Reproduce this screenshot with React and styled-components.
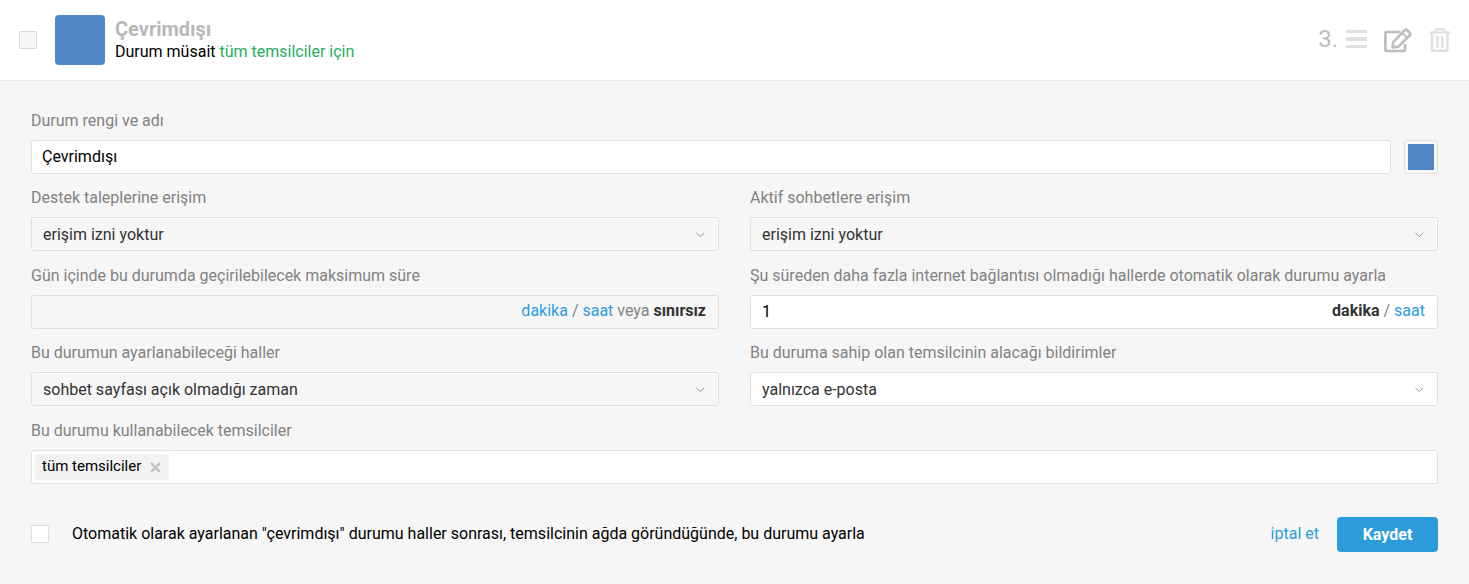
import React from "react";
import styled, { createGlobalStyle } from "styled-components";

const color = {
  page: "#f6f6f6",
  white: "#ffffff",
  border: "#dfdfdf",
  label: "#828282",
  muted: "#bdbdbd",
  faint: "#e0e0e0",
  text: "#333333",
  link: "#2d9cdb",
  green: "#27ae60",
  status: "#4f86c6",
};

const GlobalStyle = createGlobalStyle`
  *, *::before, *::after { box-sizing: border-box; }
  body { margin: 0; background: ${color.page}; }
  body, input, select, button {
    font-family: Roboto, "Liberation Sans", sans-serif;
    font-size: 16px;
    line-height: 20px;
  }
`;

const Header = styled.header`
  display: flex;
  align-items: center;
  gap: 18px;
  padding: 15px 18px 15px 19px;
  background: ${color.white};
  border-bottom: 1px solid #e8e8e8;
`;

const Checkbox = styled.input.attrs({ type: "checkbox" })`
  appearance: none;
  flex: none;
  width: 18px;
  height: 18px;
  margin: 0;
  border: 1px solid ${(p) => (p.$muted ? "#d8d8d8" : color.border)};
  border-radius: 2px;
  background: ${(p) => (p.$muted ? color.page : color.white)};
  &:checked { background: ${color.link}; }
`;

const Status = styled.div`
  display: flex;
  flex: 1;
  align-items: center;
  gap: 10px;
`;

const StatusColor = styled.span`
  width: 50px;
  height: 50px;
  border-radius: 4px;
  background: ${color.status};
`;

const StatusName = styled.h1`
  margin: 0;
  color: #b8b8b8;
  font-size: 20px;
  font-weight: 700;
  line-height: 24px;
`;

const StatusInfo = styled.p`
  margin: 0;
  color: #000;
  line-height: 22px;
`;

const Audience = styled.span`
  color: ${color.green};
`;

const Tools = styled.div`
  display: flex;
  align-items: center;
`;

const Order = styled.span`
  margin-right: 8px;
  color: ${color.muted};
  font-size: 24px;
  line-height: 28px;
  padding-bottom: 2px;
`;

const IconButton = styled.button`
  display: flex;
  padding: 0;
  margin-right: ${(p) => p.$gap || 0}px;
  border: 0;
  background: none;
  color: ${(p) => (p.$faint ? color.faint : color.muted)};
  cursor: pointer;
`;

const Form = styled.form`
  padding: 30px 31px 32px;
`;

const Fields = styled.div`
  display: grid;
  grid-template-columns: 1fr 1fr;
  gap: 14px 31px;
`;

const Field = styled.div`
  grid-column: ${(p) => (p.$wide ? "1 / -1" : "auto")};
  min-width: 0;
`;

const Label = styled.label`
  display: block;
  margin-bottom: 9px;
  color: ${color.label};
`;

const NameRow = styled.div`
  display: flex;
  gap: 13px;
`;

const TextInput = styled.input`
  flex: 1;
  min-width: 0;
  height: 34px;
  padding: 0 10px 1px;
  border: 1px solid ${color.border};
  border-radius: 3px;
  background: ${color.white};
  color: #000;
`;

const ColorInput = styled.input.attrs({ type: "color" })`
  appearance: none;
  flex: none;
  width: 34px;
  height: 34px;
  padding: 3px;
  border: 1px solid ${color.border};
  border-radius: 3px;
  background: #f8f8f8;
  &::-webkit-color-swatch-wrapper { padding: 0; }
  &::-webkit-color-swatch { border: 0; }
`;

const SelectBox = styled.div`
  position: relative;
  padding-bottom: 1px;
`;

const SelectInput = styled.select`
  appearance: none;
  display: block;
  width: 100%;
  height: 34px;
  padding: 2px 36px 0 11px;
  border: 1px solid ${color.border};
  border-radius: 3px;
  background: ${(p) => (p.$muted ? color.page : color.white)};
  box-shadow: inset -1px 1px 0 ${color.white};
  color: ${color.text};
`;

const Chevron = styled.svg`
  position: absolute;
  top: 15px;
  right: 14px;
  pointer-events: none;
`;

const DurationBox = styled.div`
  display: flex;
  height: 34px;
  padding: 0 12px 0 11px;
  border: 1px solid ${color.border};
  border-radius: 3px;
  background: ${(p) => (p.$muted ? color.page : color.white)};
`;

const DurationInput = styled.input`
  flex: 1;
  min-width: 0;
  padding: 0;
  border: 0;
  background: none;
  color: #000;
`;

const Units = styled.span`
  color: ${color.label};
  line-height: 30px;
`;

const Link = styled.a`
  color: ${color.link};
  text-decoration: none;
`;

const ActiveUnit = styled.b`
  color: ${color.text};
`;

const Tags = styled.div`
  display: flex;
  height: 34px;
  padding: 3px;
  border: 1px solid ${color.border};
  border-radius: 3px;
  background: ${color.white};
`;

const Tag = styled.span`
  display: flex;
  align-items: center;
  gap: 9px;
  padding: 0 8px 0 7px;
  border-radius: 3px;
  background: #f2f2f2;
  color: #000;
  font-size: 15px;
`;

const TagText = styled.span`
  padding-bottom: 2px;
`;

const TagInput = styled.input`
  flex: 1;
  min-width: 0;
  border: 0;
  background: none;
  outline: none;
`;

const Footer = styled.div`
  display: flex;
  align-items: center;
  gap: 18px;
  margin-top: 33px;
`;

const Option = styled.label`
  display: flex;
  flex: 1;
  align-items: center;
  gap: 23px;
  padding-bottom: 2px;
  color: #000;
`;

const CancelLink = styled(Link)`
  padding-bottom: 2px;
`;

const SaveButton = styled.button`
  min-width: 101px;
  height: 35px;
  padding: 0 20px;
  border: 0;
  border-radius: 4px;
  background: ${color.link};
  color: ${color.white};
  font-weight: 700;
  cursor: pointer;
`;

function Select({ id, label, value, muted }) {
  return (
    <Field>
      <Label htmlFor={id}>{label}</Label>
      <SelectBox>
        <SelectInput id={id} $muted={muted} defaultValue={value}>
          <option>{value}</option>
        </SelectInput>
        <Chevron width="9" height="6" viewBox="0 0 9 6" fill="none" stroke="#999999">
          <path d="M0.5 1L4.3 4.6L8.1 1" />
        </Chevron>
      </SelectBox>
    </Field>
  );
}

const DragIcon = () => (
  <svg width="21" height="20" viewBox="0 0 21 20" fill="currentColor">
    <path d="M0 0h21v3H0zM0 7h21v4H0zM0 15h21v3H0z" />
  </svg>
);

const EditIcon = () => (
  <svg width="28" height="25" viewBox="0 0 28 25" fill="none" stroke="currentColor" strokeWidth="2.6" strokeLinejoin="round">
    <path d="M16.5 4H2.4Q1.4 4 1.4 5V22Q1.4 23 2.4 23H20Q21 23 21 22V16" />
    <path d="M8.6 19.4L9.2 14.2L20.4 2.4Q21.8 1 23.3 2.3L25.6 4.5Q27 6 25.6 7.5L14.4 18.6Z" />
    <path d="M18.3 5L23 9.6" strokeWidth="1.8" />
  </svg>
);

const TrashIcon = () => (
  <svg width="22" height="25" viewBox="0 0 22 25" fill="none" stroke="currentColor">
    <path d="M0.5 4.5H21.5M6 4L7.4 1.2H14.6L16 4" strokeWidth="2.2" />
    <path d="M3 5V21.5Q3 22.8 4.3 22.8H17.1Q18.4 22.8 18.4 21.5V5" strokeWidth="2.6" />
    <path d="M8.4 8V20M13.4 8V20" strokeWidth="2.4" />
  </svg>
);

const stop = (event) => event.preventDefault();

export default function App() {
  return (
    <>
      <GlobalStyle />
      <Header>
        <Checkbox $muted aria-label="Çevrimdışı" />
        <Status>
          <StatusColor />
          <div>
            <StatusName>Çevrimdışı</StatusName>
            <StatusInfo>
              Durum müsait <Audience>tüm temsilciler için</Audience>
            </StatusInfo>
          </div>
        </Status>
        <Tools>
          <Order>3.</Order>
          <IconButton $faint $gap={17} aria-label="Sırala"><DragIcon /></IconButton>
          <IconButton $gap={17} aria-label="Düzenle"><EditIcon /></IconButton>
          <IconButton $faint aria-label="Sil"><TrashIcon /></IconButton>
        </Tools>
      </Header>

      <Form onSubmit={stop}>
        <Fields>
          <Field $wide>
            <Label htmlFor="name">Durum rengi ve adı</Label>
            <NameRow>
              <TextInput id="name" defaultValue="Çevrimdışı" />
              <ColorInput aria-label="Durum rengi" defaultValue={color.status} />
            </NameRow>
          </Field>

          <Select id="tickets" label="Destek taleplerine erişim" value="erişim izni yoktur" muted />
          <Select id="chats" label="Aktif sohbetlere erişim" value="erişim izni yoktur" muted />

          <Field>
            <Label htmlFor="limit">Gün içinde bu durumda geçirilebilecek maksimum süre</Label>
            <DurationBox $muted>
              <DurationInput id="limit" />
              <Units>
                <Link href="#dakika">dakika</Link> / <Link href="#saat">saat</Link> veya <ActiveUnit>sınırsız</ActiveUnit>
              </Units>
            </DurationBox>
          </Field>
          <Field>
            <Label htmlFor="offline">
              Şu süreden daha fazla internet bağlantısı olmadığı hallerde otomatik olarak durumu ayarla
            </Label>
            <DurationBox>
              <DurationInput id="offline" defaultValue="1" />
              <Units>
                <ActiveUnit>dakika</ActiveUnit> / <Link href="#saat">saat</Link>
              </Units>
            </DurationBox>
          </Field>

          <Select id="cases" label="Bu durumun ayarlanabileceği haller" value="sohbet sayfası açık olmadığı zaman" muted />
          <Select id="notices" label="Bu duruma sahip olan temsilcinin alacağı bildirimler" value="yalnızca e-posta" />

          <Field $wide>
            <Label htmlFor="agents">Bu durumu kullanabilecek temsilciler</Label>
            <Tags>
              <Tag>
                <TagText>tüm temsilciler</TagText>
                <IconButton type="button" aria-label="Kaldır">
                  <svg width="11" height="11" viewBox="0 0 11 11" stroke="currentColor" strokeWidth="2">
                    <path d="M1 1L10 10M10 1L1 10" />
                  </svg>
                </IconButton>
              </Tag>
              <TagInput id="agents" />
            </Tags>
          </Field>
        </Fields>

        <Footer>
          <Option>
            <Checkbox />
            Otomatik olarak ayarlanan "çevrimdışı" durumu haller sonrası, temsilcinin ağda göründüğünde, bu durumu ayarla
          </Option>
          <CancelLink href="#iptal">iptal et</CancelLink>
          <SaveButton>Kaydet</SaveButton>
        </Footer>
      </Form>
    </>
  );
}
